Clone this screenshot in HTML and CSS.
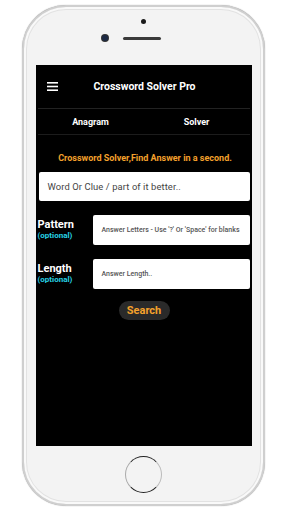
FILE: index.html
```html
<!DOCTYPE html>
<html>
<head>
<meta charset="utf-8">
<link rel="stylesheet" href="styles.css">
</head>
<body>
<div class="phone">
  <div class="phone-top">
    <div class="sensor"></div>
    <div class="cam-row">
      <div class="camera"></div>
      <div class="speaker"></div>
    </div>
  </div>
  <div class="screen">
    <div class="appbar">
      <svg class="menu" width="11" height="9" viewBox="0 0 11 9"><rect y="0" width="11" height="1.6" fill="#fff"/><rect y="3.7" width="11" height="1.6" fill="#fff"/><rect y="7.4" width="11" height="1.6" fill="#fff"/></svg>
      <div class="title">Crossword Solver Pro</div>
    </div>
    <div class="tabs">
      <div class="tab">Anagram</div>
      <div class="tab">Solver</div>
    </div>
    <div class="content">
      <div class="tagline">Crossword Solver,Find Answer in a second.</div>
      <div class="input big">Word Or Clue / part of it better..</div>
      <div class="row">
        <div class="label"><div class="lname">Pattern</div><div class="opt">(optional)</div></div>
        <div class="input small">Answer Letters - Use '?' Or 'Space' for blanks</div>
      </div>
      <div class="row">
        <div class="label"><div class="lname">Length</div><div class="opt">(optional)</div></div>
        <div class="input small">Answer Length..</div>
      </div>
      <div class="btn-wrap"><div class="btn">Search</div></div>
    </div>
  </div>
  <div class="phone-bottom">
    <div class="home"></div>
  </div>
</div>
</body>
</html>
```
FILE: styles.css
```css
html, body { margin: 0; padding: 0; background: #fff; }
body { width: 288px; height: 512px; overflow: hidden; font-family: Roboto, "Liberation Sans", sans-serif; }
.phone {
  margin: 5px 0 0 22px;
  width: 239px;
  height: 497px;
  border: 2px solid #cfcfcf;
  border-radius: 44px;
  background: #f3f3f3;
  box-shadow: inset 0 0 0 2px #f9f9f9, inset 0 0 0 3px #e2e2e2, 0 0 1px #999;
  display: flex;
  flex-direction: column;
  align-items: center;
}
.phone-top { height: 58px; width: 100%; position: relative; }
.sensor { position: absolute; left: 117px; top: 12px; width: 5px; height: 5px; border-radius: 50%; background: #1a1a1a; }
.cam-row { position: absolute; left: 78px; top: 28px; display: flex; align-items: center; gap: 15px; }
.camera { width: 6px; height: 6px; border-radius: 50%; background: #1d2a44; box-shadow: 0 0 0 1px #333; }
.speaker { width: 38px; height: 3px; border-radius: 2px; background: #3a3a3a; }
.screen { width: 216px; height: 381px; background: #000; color: #fff; display: flex; flex-direction: column; }
.appbar { height: 43px; display: flex; align-items: center; position: relative; border-bottom: 1px solid #222; margin: 0 2px; }
.menu { position: absolute; left: 9px; top: 17px; }
.title { flex: 1; text-align: center; font-weight: 700; font-size: 10.5px; padding-left: 2px; }
.tabs { height: 25px; display: flex; border-bottom: 1px solid #1c1c1c; margin: 0 2px; }
.tab { flex: 1; display: flex; align-items: center; justify-content: center; font-weight: 700; font-size: 9px; }
.content { padding: 0 2px 0 2px; display: flex; flex-direction: column; }
.tagline { color: #f4a12c; font-weight: 700; font-size: 9px; text-align: center; margin-top: 17px; height: 12px; line-height: 12px; padding-left: 3px; }
.input { background: #fff; border-radius: 2px; color: #555; display: flex; align-items: center; }
.input.big { margin: 8px 0 0 1px; height: 29px; padding-left: 9px; font-size: 9.4px; color: #444; letter-spacing: 0.1px; }
.row { display: flex; align-items: center; margin-top: 14px; }
.row + .row { margin-top: 14px; }
.label { width: 55px; }
.lname { font-weight: 700; font-size: 11px; line-height: 12px; }
.opt { color: #27d3e6; font-weight: 700; font-size: 8px; line-height: 10px; }
.input.small { flex: 1; height: 30px; padding-left: 9px; font-size: 7px; color: #555; font-weight: 500; }
.btn-wrap { display: flex; justify-content: center; margin-top: 12px; }
.btn { background: #2a2a2a; color: #f4a12c; font-weight: 700; font-size: 11px; border-radius: 10px; width: 51px; height: 19px; display: flex; align-items: center; justify-content: center; margin-left: 1px; }
.phone-bottom { flex: 1; display: flex; align-items: center; justify-content: center; width: 100%; }
.home { width: 35px; height: 35px; border-radius: 50%; border: 1.5px solid #222; border-left-color: #aaa; border-right-color: #bbb; background: #f3f3f3; margin-top: -2px; }
```
